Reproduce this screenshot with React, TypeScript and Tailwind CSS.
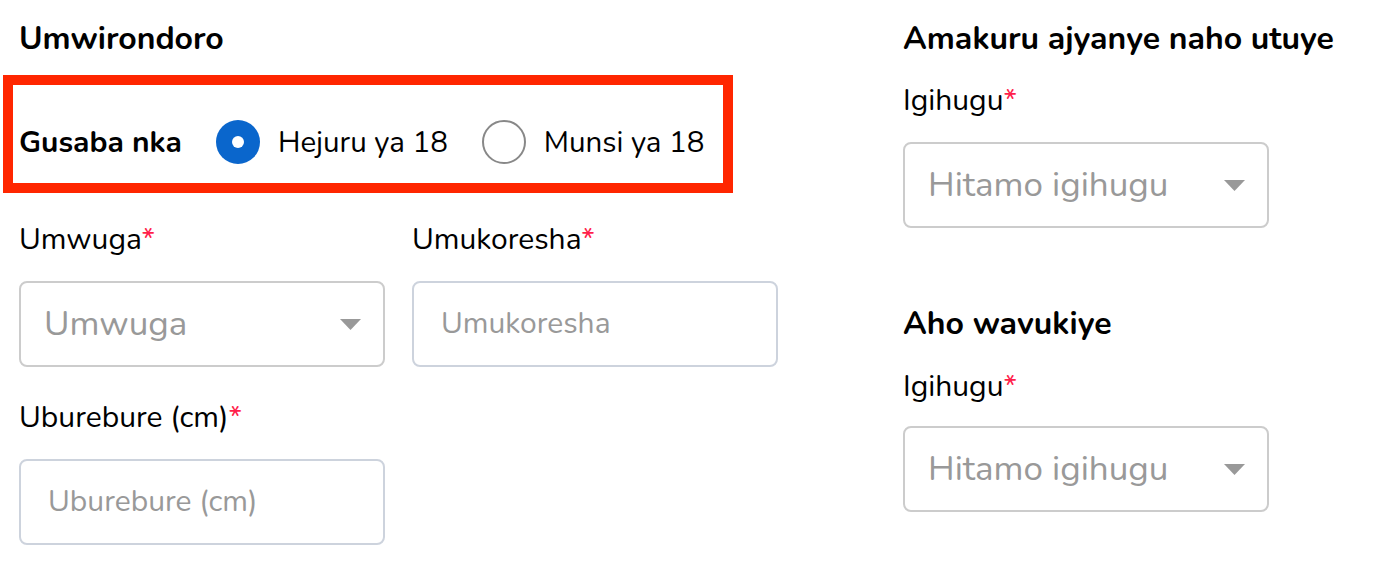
import React from 'react';

const Req = () => <span className="text-[#ff1f4b]">*</span>;

const Caret = () => (
  <svg width="21" height="11" viewBox="0 0 21 11" className="shrink-0">
    <path d="M0 0 L21 0 L10.5 11 Z" fill="#999999" />
  </svg>
);

const Label = ({ children, className = '' }: { children: React.ReactNode; className?: string }) => (
  <div className={`text-[30px] leading-[34px] text-black ${className}`}>
    {children}
    <Req />
  </div>
);

const SelectBox = ({ placeholder, className = '' }: { placeholder: string; className?: string }) => (
  <div
    className={`h-[86px] w-[366px] rounded-[8px] border-2 border-[#cccccc] flex items-center justify-between pl-[23px] pr-[22px] ${className}`}
  >
    <span className="text-[35px] leading-[40px] text-[#999999]">{placeholder}</span>
    <Caret />
  </div>
);

const TextBox = ({ placeholder, className = '' }: { placeholder: string; className?: string }) => (
  <div
    className={`h-[86px] w-[366px] rounded-[8px] border-2 border-[#cdd3dd] flex items-center pl-[27px] ${className}`}
  >
    <span className="text-[30px] leading-[36px] text-[#999999]">{placeholder}</span>
  </div>
);

export default function App() {
  return (
    <div
      className="w-[1383px] h-[566px] bg-white flex pl-[19px] pt-[21px] overflow-hidden"
      style={{ fontFamily: 'Nunito, Lato, "Open Sans", sans-serif' }}
    >
      {/* left column */}
      <div className="w-[884px] flex flex-col">
        <h2 className="text-[32px] leading-[36px] font-bold text-black">Umwirondoro</h2>

        <div className="mt-[18px] -ml-[16px] w-[730px] h-[118px] border-[10px] border-[#ff2600] flex items-center pl-[6px] pt-[16px]">
          <span className="text-[30px] font-bold text-black">Gusaba nka</span>
          <div className="ml-[34px] flex items-center gap-[18px]">
            <span className="w-[44px] h-[44px] rounded-full bg-[#0a66cc] flex items-center justify-center">
              <span className="w-[12px] h-[12px] rounded-full bg-white" />
            </span>
            <span className="text-[29.5px] text-black">Hejuru ya 18</span>
          </div>
          <div className="ml-[34px] flex items-center gap-[18px]">
            <span className="w-[44px] h-[44px] rounded-full border-2 border-[#888888]" />
            <span className="text-[29.5px] text-black">Munsi ya 18</span>
          </div>
        </div>

        <div className="mt-[30px] flex gap-[27px]">
          <div className="flex flex-col">
            <Label>Umwuga</Label>
            <SelectBox placeholder="Umwuga" className="mt-[24px]" />
          </div>
          <div className="flex flex-col">
            <Label>Umukoresha</Label>
            <TextBox placeholder="Umukoresha" className="mt-[24px]" />
          </div>
        </div>

        <Label className="mt-[34px]">Uburebure (cm)</Label>
        <TextBox placeholder="Uburebure (cm)" className="mt-[24px]" />
      </div>

      {/* right column */}
      <div className="flex flex-col">
        <h2 className="text-[32px] leading-[36px] font-bold text-black">Amakuru ajyanye naho utuye</h2>
        <Label className="mt-[27px]">Igihugu</Label>
        <SelectBox placeholder="Hitamo igihugu" className="mt-[24px]" />
        <h2 className="mt-[78px] text-[32px] leading-[36px] font-bold text-black">Aho wavukiye</h2>
        <Label className="mt-[28px]">Igihugu</Label>
        <SelectBox placeholder="Hitamo igihugu" className="mt-[22px]" />
      </div>
    </div>
  );
}
